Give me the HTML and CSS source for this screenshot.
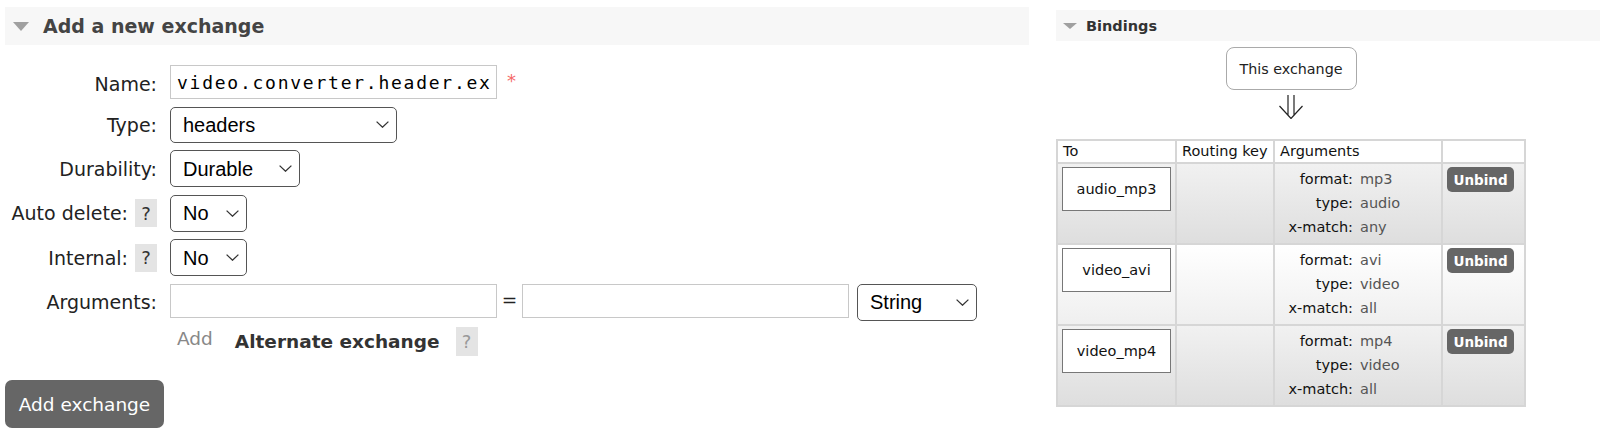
FILE: index.html
```html
<!DOCTYPE html>
<html lang="en">
<head>
    <meta charset="UTF-8">
    <meta name="viewport" content="width=device-width, initial-scale=1.0">
    <title>Exchanges</title>
    <link rel="stylesheet" href="styles.css">
</head>
<body>
    <div class="main">
        <!-- Left: form for declaring a new exchange -->
        <div class="section section-add">
            <h2 class="section-title"><span class="toggle"></span>Add a new exchange</h2>
            <form class="exchange-form" onsubmit="return false">
                <div class="form-grid">
                    <label class="form-label label-name" for="name">Name:</label>
                    <div class="field">
                        <input type="text" id="name" class="text-input name-input" value="video.converter.header.exchange">
                        <span class="mand">*</span>
                    </div>

                    <label class="form-label" for="type">Type:</label>
                    <div class="field">
                        <span class="select-wrap">
                            <select id="type" class="select select-type">
                                <option>direct</option>
                                <option>fanout</option>
                                <option selected>headers</option>
                                <option>topic</option>
                            </select>
                            <svg class="chevron" width="13" height="7" viewBox="0 0 13 7"><path d="M0.6 0.6 L6.5 6.2 L12.4 0.6" /></svg>
                        </span>
                    </div>

                    <label class="form-label" for="durable">Durability:</label>
                    <div class="field">
                        <span class="select-wrap">
                            <select id="durable" class="select select-durable">
                                <option selected>Durable</option>
                                <option>Transient</option>
                            </select>
                            <svg class="chevron" width="13" height="7" viewBox="0 0 13 7"><path d="M0.6 0.6 L6.5 6.2 L12.4 0.6" /></svg>
                        </span>
                    </div>

                    <label class="form-label" for="auto_delete">Auto delete: <span class="help">?</span></label>
                    <div class="field">
                        <span class="select-wrap">
                            <select id="auto_delete" class="select select-bool">
                                <option selected>No</option>
                                <option>Yes</option>
                            </select>
                            <svg class="chevron" width="13" height="7" viewBox="0 0 13 7"><path d="M0.6 0.6 L6.5 6.2 L12.4 0.6" /></svg>
                        </span>
                    </div>

                    <label class="form-label" for="internal">Internal: <span class="help">?</span></label>
                    <div class="field">
                        <span class="select-wrap">
                            <select id="internal" class="select select-bool">
                                <option selected>No</option>
                                <option>Yes</option>
                            </select>
                            <svg class="chevron" width="13" height="7" viewBox="0 0 13 7"><path d="M0.6 0.6 L6.5 6.2 L12.4 0.6" /></svg>
                        </span>
                    </div>

                    <label class="form-label" for="arg_key">Arguments:</label>
                    <div class="field field-args">
                        <input type="text" id="arg_key" class="text-input arg-input">
                        <span class="equals">=</span>
                        <input type="text" class="text-input arg-input">
                        <span class="select-wrap arg-type">
                            <select class="select select-string">
                                <option selected>String</option>
                                <option>Number</option>
                                <option>Boolean</option>
                                <option>List</option>
                            </select>
                            <svg class="chevron" width="13" height="7" viewBox="0 0 13 7"><path d="M0.6 0.6 L6.5 6.2 L12.4 0.6" /></svg>
                        </span>
                    </div>

                    <div class="arg-links">
                        <span class="arg-add">Add</span>
                        <span class="arg-shortcut">Alternate exchange</span>
                        <span class="help help-light">?</span>
                    </div>
                </div>
                <button type="submit" class="button-add">Add exchange</button>
            </form>
        </div>

        <!-- Right: bindings from this exchange -->
        <div class="section section-bindings">
            <h2 class="section-title"><span class="toggle"></span>Bindings</h2>
            <div class="source">
                <div class="source-box">This exchange</div>
                <svg class="flow-arrow" width="26" height="24" viewBox="0 0 26 24">
                    <path d="M10 0 V20 M16 0 V20 M1.5 11 L13 23.5 L24.5 11" />
                </svg>
            </div>
            <table class="bindings-table">
                <thead>
                    <tr>
                        <th class="col-to">To</th>
                        <th class="col-key">Routing key</th>
                        <th class="col-args">Arguments</th>
                        <th class="col-action"></th>
                    </tr>
                </thead>
                <tbody>
                    <tr class="alt1">
                        <td><span class="dest">audio_mp3</span></td>
                        <td></td>
                        <td>
                            <div class="args">
                                <span class="arg-key">format:</span><span class="arg-val">mp3</span>
                                <span class="arg-key">type:</span><span class="arg-val">audio</span>
                                <span class="arg-key">x-match:</span><span class="arg-val">any</span>
                            </div>
                        </td>
                        <td><button class="button-small">Unbind</button></td>
                    </tr>
                    <tr class="alt2">
                        <td><span class="dest">video_avi</span></td>
                        <td></td>
                        <td>
                            <div class="args">
                                <span class="arg-key">format:</span><span class="arg-val">avi</span>
                                <span class="arg-key">type:</span><span class="arg-val">video</span>
                                <span class="arg-key">x-match:</span><span class="arg-val">all</span>
                            </div>
                        </td>
                        <td><button class="button-small">Unbind</button></td>
                    </tr>
                    <tr class="alt1">
                        <td><span class="dest">video_mp4</span></td>
                        <td></td>
                        <td>
                            <div class="args">
                                <span class="arg-key">format:</span><span class="arg-val">mp4</span>
                                <span class="arg-key">type:</span><span class="arg-val">video</span>
                                <span class="arg-key">x-match:</span><span class="arg-val">all</span>
                            </div>
                        </td>
                        <td><button class="button-small">Unbind</button></td>
                    </tr>
                </tbody>
            </table>
        </div>
    </div>
</body>
</html>
```

FILE: styles.css
```css
body {
    margin: 0;
    font-family: "DejaVu Sans", Verdana, sans-serif;
    color: #222;
    background-color: #fff;
}

.main {
    display: flex;
    align-items: flex-start;
    gap: 27px;
    padding-left: 5px;
}

/* Collapsible section headers */
.section-title {
    display: flex;
    align-items: center;
    margin: 0;
    background-color: #f7f7f7;
    color: #444;
    font-weight: bold;
}

.toggle {
    width: 0;
    height: 0;
    border-style: solid;
    border-color: #a0a0a0 transparent transparent transparent;
}

.section-add {
    width: 1024px;
    margin-top: 7px;
}

.section-add .section-title {
    height: 38px;
    padding-left: 8px;
    font-size: 19px;
}

.section-add .toggle {
    border-width: 9px 8.5px 0 8.5px;
    margin-right: 14px;
}

.section-bindings {
    flex: 1;
    margin-top: 10px;
}

.section-bindings .section-title {
    height: 31px;
    padding-left: 7px;
    font-size: 14.5px;
    color: #333;
}

.section-bindings .toggle {
    border-width: 6px 7px 0 7px;
    margin-right: 9px;
}

/* Add exchange form */
.exchange-form {
    margin-top: 20px;
}

.form-grid {
    display: grid;
    grid-template-columns: 152px auto;
    column-gap: 13px;
    row-gap: 7.5px;
    align-items: center;
}

.form-label {
    display: flex;
    justify-content: flex-end;
    align-items: center;
    gap: 7px;
    font-size: 19px;
    color: #222;
    white-space: nowrap;
}

.label-name {
    padding-top: 3px;
}

.help {
    display: inline-flex;
    align-items: center;
    justify-content: center;
    width: 22px;
    height: 28px;
    background-color: #e4e4e4;
    color: #333;
    font-size: 18px;
    font-weight: normal;
}

.help-light {
    height: 29px;
    color: #999;
}

.field {
    display: flex;
    align-items: flex-start;
}

.text-input {
    box-sizing: border-box;
    height: 34px;
    width: 327px;
    margin: 0;
    padding: 0 6px;
    border: 1px solid #c8c8c8;
    border-radius: 0;
    background-color: #fff;
    color: #000;
    outline: none;
}

.name-input {
    font-family: "DejaVu Sans Mono", Menlo, monospace;
    font-size: 18px;
    letter-spacing: 1.75px;
}

.mand {
    margin: 7px 0 0 10px;
    color: #f56a6a;
    font-size: 18px;
    line-height: 1;
}

.select-wrap {
    position: relative;
    display: inline-block;
}

.select {
    box-sizing: border-box;
    height: 37px;
    margin: 0;
    padding: 0 30px 0 12px;
    border: 1px solid #555;
    border-radius: 5px;
    background-color: #fff;
    color: #000;
    font-family: "Liberation Sans", Arial, sans-serif;
    font-size: 20px;
    appearance: none;
    -webkit-appearance: none;
    outline: none;
}

.select-type {
    width: 227px;
    height: 36px;
}

.select-durable {
    width: 130px;
}

.select-bool {
    width: 77px;
}

.select-string {
    width: 120px;
}

.chevron {
    position: absolute;
    right: 8px;
    top: 15px;
    fill: none;
    stroke: #333;
    stroke-width: 1.3;
}

.select-type + .chevron {
    top: 14px;
}

.equals {
    width: 25px;
    text-align: center;
    font-size: 18.5px;
    line-height: 32px;
}

.arg-type {
    margin-left: 8px;
}

.arg-links {
    grid-column: 2;
    display: flex;
    align-items: center;
    margin-top: -1px;
    font-size: 18.5px;
}

.arg-add {
    margin: -6px 22px 0 7px;
    color: #888;
}

.arg-shortcut {
    margin-right: 16px;
    font-weight: bold;
    color: #333;
}

.button-add {
    display: block;
    width: 159px;
    height: 48px;
    margin-top: 24px;
    padding: 0;
    border: none;
    border-radius: 7px;
    background-color: #666;
    color: #fff;
    font-family: "DejaVu Sans", Verdana, sans-serif;
    font-size: 18.5px;
    cursor: pointer;
}

/* Bindings diagram */
.source {
    width: 470px;
    display: flex;
    flex-direction: column;
    align-items: center;
}

.source-box {
    box-sizing: border-box;
    width: 131px;
    height: 43px;
    margin-top: 6px;
    display: flex;
    align-items: center;
    justify-content: center;
    border: 1px solid #aaa;
    border-radius: 8px;
    font-size: 14.3px;
    color: #222;
}

.flow-arrow {
    margin-top: 5px;
    fill: none;
    stroke: #222;
    stroke-width: 1.2;
}

.bindings-table {
    margin-top: 20px;
    width: 470px;
    table-layout: fixed;
    border-collapse: separate;
    border-spacing: 0;
    border: 1px solid #d6d6d6;
    font-size: 14.5px;
}

.bindings-table th,
.bindings-table td {
    box-sizing: border-box;
    border: 1px solid #d6d6d6;
    vertical-align: top;
}

.bindings-table th {
    padding: 2px 5px;
    font-weight: normal;
    text-align: left;
    line-height: 17px;
    color: #111;
    background-color: #fff;
}

.col-to {
    width: 119px;
}

.col-key {
    width: 98px;
}

.col-args {
    width: 168px;
}

.col-action {
    width: 83px;
}

.bindings-table td {
    padding: 3px 4px 4px;
}

.alt1 td {
    background: linear-gradient(#f1f1f1, #dedede);
}

.alt2 td {
    background: linear-gradient(#fff, #efefef);
}

.dest {
    box-sizing: border-box;
    display: block;
    width: 109px;
    height: 44px;
    line-height: 42px;
    border: 1px solid #777;
    background-color: #fff;
    text-align: center;
    color: #111;
}

.args {
    display: grid;
    grid-template-columns: 74px auto;
    column-gap: 7px;
    line-height: 24px;
}

.arg-key {
    text-align: right;
    color: #111;
}

.arg-val {
    color: #555;
}

.button-small {
    width: 67px;
    height: 25px;
    padding: 0;
    border: none;
    border-radius: 5px;
    background-color: #666;
    color: #fff;
    font-family: "DejaVu Sans", Verdana, sans-serif;
    font-size: 13.5px;
    font-weight: bold;
    cursor: pointer;
}
```
